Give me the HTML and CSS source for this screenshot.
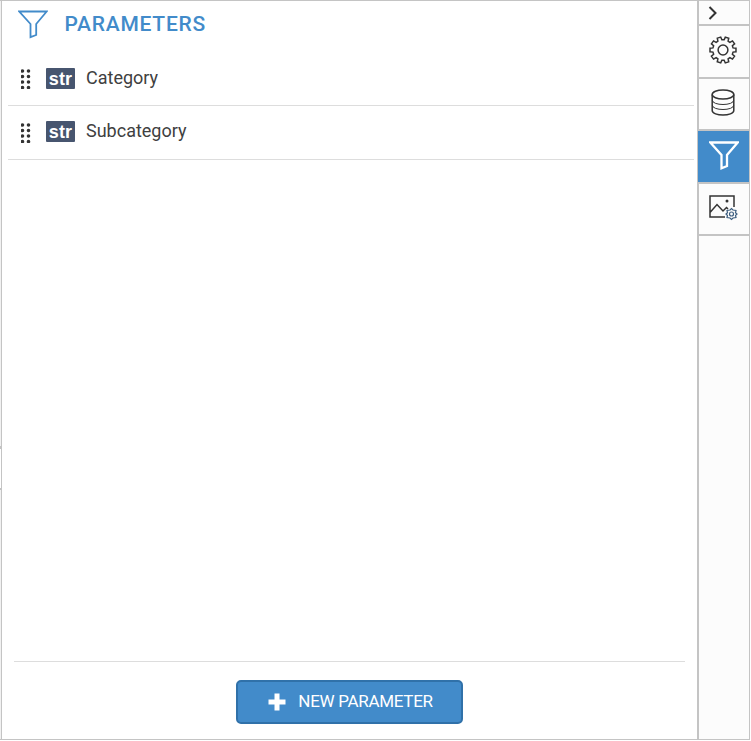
FILE: index.html
```html
<!DOCTYPE html>
<html lang="en">
<head>
<meta charset="utf-8">
<title>Parameters</title>
<link rel="stylesheet" href="styles.css">
</head>
<body>
<div class="window">
  <div class="edge"><i></i><i></i><i></i></div>
  <main class="panel">
    <header class="heading">
      <svg class="funnel" viewBox="0 0 30 30" width="30" height="30"><path d="M1.3 1.5H28.700L18.200 14V25L12.500 27.200V14Z"/></svg>
      <h1>PARAMETERS</h1>
    </header>
    <ul class="list">
      <li class="row">
        <svg class="grip" width="10" height="20" viewBox="0 0 10 20"><path d="M1.500 2h0M1.500 7.500h0M1.500 13h0M1.500 18.500h0M7.500 2h0M7.500 7.500h0M7.500 13h0M7.500 18.500h0"/></svg>
        <span class="type">str</span><span class="name">Category</span>
      </li>
      <li class="row second">
        <svg class="grip" width="10" height="20" viewBox="0 0 10 20"><path d="M1.500 2h0M1.500 7.500h0M1.500 13h0M1.500 18.500h0M7.500 2h0M7.500 7.500h0M7.500 13h0M7.500 18.500h0"/></svg>
        <span class="type">str</span><span class="name">Subcategory</span>
      </li>
    </ul>
    <footer class="footer">
      <button class="add"><svg width="18" height="18" viewBox="0 0 18 18"><path d="M9 .5v17M.5 9h17"/></svg><span>NEW PARAMETER</span></button>
    </footer>
  </main>
  <nav class="tabs">
    <div class="tab collapse"><svg width="12" height="16" viewBox="0 0 12 16"><path d="M2.500 2L8.500 8L2.500 14"/></svg></div>
    <div class="tab t1"><svg width="30" height="30" viewBox="-15 -15 30 30"><path transform="rotate(18)" d="M-2.100 -10L-1.800 -13H1.800L2.100 -10L4.200 -9.300L6.200 -11.600L9.100 -9.500L7.600 -6.900L8.900 -5.100L11.800 -5.700L12.900 -2.300L10.200 -1.100V1.100L12.900 2.300L11.800 5.700L8.900 5.100L7.600 6.900L9.100 9.500L6.200 11.600L4.200 9.300L2.100 10L1.800 13H-1.800L-2.100 10L-4.200 9.300L-6.200 11.600L-9.100 9.500L-7.600 6.900L-8.900 5.100L-11.800 5.700L-12.900 2.300L-10.200 1.100V-1.100L-12.900 -2.300L-11.800 -5.700L-8.900 -5.100L-7.600 -6.900L-9.100 -9.500L-6.200 -11.600L-4.200 -9.300Z"/><circle r="4.900"/></svg></div>
    <div class="tab t2"><svg width="26" height="30" viewBox="0 0 26 30"><ellipse cx="13" cy="6.500" rx="10.800" ry="4.600"/><path d="M2.200 6.500V22.500C2.200 28.500 23.800 28.500 23.800 22.500V6.500"/><path class="fine" d="M2.200 12C2.200 18 23.800 18 23.800 12M2.200 17C2.200 23 23.800 23 23.800 17"/></svg></div>
    <div class="tab t3"><svg class="funnel" viewBox="0 0 30 30" width="30" height="30"><path d="M1.300 1.500H28.700L18 14V25L12.500 27.200V14Z"/></svg></div>
    <div class="tab t4"><svg width="30" height="28" viewBox="0 0 30 28"><path d="M17 23H2V2H26V13M2 18.500L9 10.500L15 17L18.500 13.500L20 15"/><circle class="dot" cx="19" cy="7" r="1.500"/><path class="cog" d="M22 16L23.500 14.500L25 16L28 16.500L27.500 18.700L29 20L27.500 21.500L28 23.500L25 24L23.500 25.500L22 24L19 23.500L19.500 21.500L18 20L19.500 18.700L19 16.500Z"/><circle class="cog" cx="23.500" cy="20" r="2"/></svg></div>
  </nav>
</div>
</body>
</html>
```
FILE: styles.css
```css
* { box-sizing: border-box; }
body { margin: 0; background: #fff; font-family: Roboto, "Liberation Sans", sans-serif; }
.window { width: 750px; height: 740px; display: flex; border: 1px solid #c4c4c4; border-left: 0; }
.edge { width: 2px; background: #f1f1f1; border-right: 1px solid #c4c4c4; padding-top: 445px; }
.edge i { display: block; height: 3px; background: #c4c4c4; }
.edge i:nth-child(2) { height: 39px; background: #fff; }
.edge i:nth-child(3) { height: 2px; }
.panel { width: 695px; display: flex; flex-direction: column; }
.heading { height: 51px; padding: 9px 0 0 16px; display: flex; align-items: flex-start; }
svg { display: block; fill: none; flex: none; }
.funnel { stroke: #428bca; stroke-width: 1.800; }
h1 { margin: 1px 0 0 16.500px; font-size: 21px; line-height: 26px; font-weight: 500; letter-spacing: .750px; color: #428bca; }
.list { list-style: none; margin: 0 3px 0 6px; padding: 0; flex: 1; }
.row { height: 54px; border-bottom: 1px solid #ddd; display: flex; align-items: center; padding-left: 13px; }
.grip { stroke: #333; stroke-width: 3.600; stroke-linecap: round; margin-right: 15px; }
.type { width: 29px; height: 21px; border-radius: 1px; background: #47556f; color: #fff; font: bold 18px/22px "Liberation Sans", sans-serif; letter-spacing: .2px; text-align: center; }
.name { font-size: 18px; line-height: 22px; color: #404040; margin: 0 0 2px 11px; }
.second .type { margin-bottom: 2px; }
.second .name { margin-bottom: 4px; }
.footer { height: 78px; margin: 0 12px; border-top: 1px solid #ddd; display: flex; justify-content: center; padding-top: 18px; }
.add { width: 227px; height: 44px; border: 2px solid #3071a9; border-radius: 5px; background: #428bca; color: #fff; font: 17px/20px Roboto, sans-serif; letter-spacing: -.3px; display: flex; align-items: center; justify-content: center; gap: 12px; padding: 0 0 1px 2px; }
.add svg { stroke: #fff; stroke-width: 5; }
.add span { margin-bottom: 1px; }
.tabs { width: 52px; background: #fcfcfc; border-left: 2px solid #c4c4c4; }
.tab { height: 53px; border-bottom: 2px solid #c4c4c4; display: flex; align-items: center; justify-content: center; padding: 0 2px 2px 0; stroke: #333; stroke-width: 1.500; }
.collapse { height: 25px; justify-content: flex-start; padding: 0 0 0 7.500px; stroke-width: 2; }
.t1 { padding-bottom: 3px; }
.t2 { height: 52px; padding-bottom: 2px; }
.t3 { margin-left: -1px; padding-right: 0; background: #428bca; }
.t3 .funnel { stroke: #fff; stroke-width: 2.300; }
.t4 { height: 52px; }
.fine { stroke-width: 1; }
.dot { fill: #333; stroke: none; }
.cog { stroke: #3e5f80; stroke-width: 1.200; }
```
